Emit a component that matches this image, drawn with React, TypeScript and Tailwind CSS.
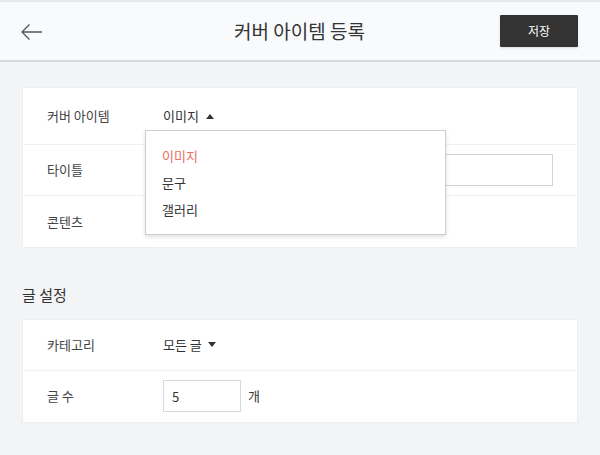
export default function App() {
  const font = { fontFamily: '"Noto Sans CJK KR", "Noto Sans", sans-serif' };
  return (
    <div className="min-h-[455px] w-[600px] bg-[#f3f4f6] text-[#333]" style={font}>
      <div className="h-[2px] bg-[#e6e8eb]" />
      <header className="flex h-[60px] items-center border-b-2 border-[#d3d9e0] bg-[#f9fafb] pl-[21px] pr-[22px]">
        <div className="w-[78px]">
          <svg width="22" height="18" viewBox="0 0 22 18" fill="none" stroke="#555" strokeWidth="1.3" className="mt-[1px]">
            <path d="M1 9 H21 M8.5 1.5 L1 9 L8.5 16.5" />
          </svg>
        </div>
        <h1 className="flex-1 text-center text-[19px] text-[#333]">커버 아이템 등록</h1>
        <button className="h-[32px] w-[78px] rounded-[1px] bg-[#333] text-[12px] text-white shadow-sm">저장</button>
      </header>

      <main className="px-[22px] pt-[25px]">
        <section className="relative border border-[#eceef1] bg-white">
          <div className="flex h-[57px] items-center border-b border-[#f0f1f3] pl-[24px]">
            <span className="w-[116px] text-[13px] text-[#444]">커버 아이템</span>
            <span className="flex items-center gap-[7px] text-[13px]">
              이미지
              <svg width="8" height="5" viewBox="0 0 8 5"><path d="M0 5 L4 0 L8 5 Z" fill="#333" /></svg>
            </span>
          </div>
          <div className="flex h-[51px] items-center border-b border-[#f0f1f3] pl-[24px] pr-[24px]">
            <span className="w-[116px] text-[13px] text-[#444]">타이틀</span>
            <input className="h-[32px] flex-1 border border-[#cfd4db] bg-white px-2 outline-none" />
          </div>
          <div className="flex h-[51px] items-center pl-[24px]">
            <span className="w-[116px] text-[13px] text-[#444]">콘텐츠</span>
          </div>

          <ul className="absolute left-[122px] top-[42px] w-[301px] border border-[#c8ced6] bg-white py-[11px] pl-[16px] text-[13px] shadow-[0_2px_4px_rgba(0,0,0,0.12)]">
            <li className="flex h-[27px] items-center text-[#e8705f]">이미지</li>
            <li className="flex h-[27px] items-center">문구</li>
            <li className="flex h-[27px] items-center">갤러리</li>
          </ul>
        </section>

        <h2 className="mt-[36px] mb-[12px] text-[15px] text-[#333]">글 설정</h2>

        <section className="border border-[#eceef1] bg-white">
          <div className="flex h-[51px] items-center border-b border-[#f0f1f3] pl-[24px]">
            <span className="w-[116px] text-[13px] text-[#444]">카테고리</span>
            <span className="flex items-center gap-[6px] text-[13px]">
              모든 글
              <svg width="8" height="5" viewBox="0 0 8 5"><path d="M0 0 L8 0 L4 5 Z" fill="#333" /></svg>
            </span>
          </div>
          <div className="flex h-[51px] items-center pl-[24px]">
            <span className="w-[116px] text-[13px] text-[#444]">글 수</span>
            <input
              defaultValue="5"
              className="h-[32px] w-[78px] border border-[#d5dae0] bg-white px-[8px] text-[13px] text-[#333] outline-none"
            />
            <span className="ml-[7px] text-[13px]">개</span>
          </div>
        </section>
      </main>
    </div>
  );
}
